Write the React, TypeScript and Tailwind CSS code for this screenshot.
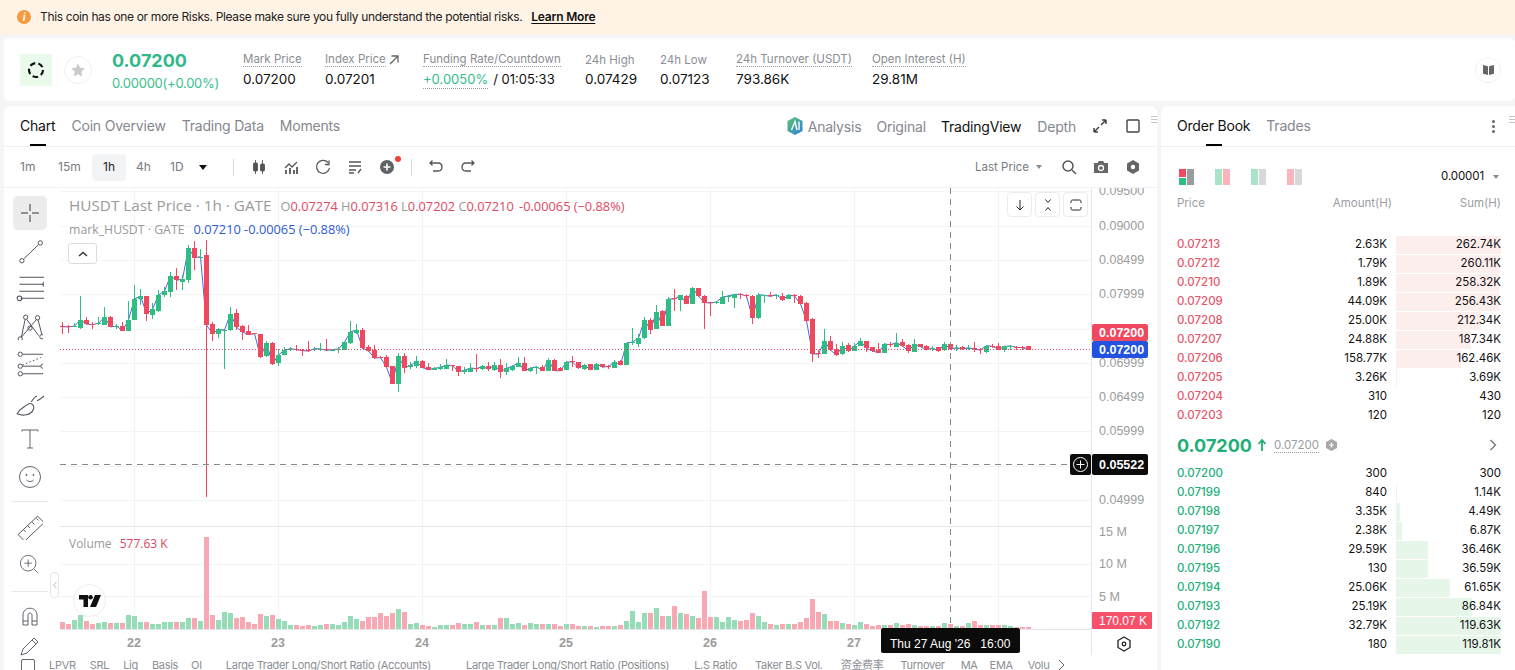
import React from "react";

type Candle = [number, number, number, number, number];

const UI_FONT = "[font-family:Inter,'Noto_Sans_CJK_SC',sans-serif]";

// green flag, body top, body bottom, wick top, wick bottom (zoomed px)
const seg1: Candle[] = [
  [0,408,410,395,432],[0,408,411,405,428],[1,408,411,400,412],[1,390,414,318,416],[0,390,402,380,405],[0,402,404,395,418],
  [1,400,403,382,405],[1,381,405,352,405],[0,381,411,378,412],[1,408,410,403,418],[0,408,422,397,422],[1,390,422,333,422],
  [1,327,390,285,390],[1,318,327,298,345],[0,318,371,318,392],[1,358,375,340,386],[1,315,363,300,365],[1,303,315,290,322],
  [1,258,306,245,320],[0,258,271,235,300],[1,267,275,255,300],[1,174,270,165,280],[0,174,203,153,240],[1,200,203,178,205],
  [0,195,405,150,921],[0,402,431,397,452],[1,418,431,415,445],[1,420,422,420,536],[1,371,420,352,422],[0,369,411,357,420],
  [0,408,426,405,450],[0,423,434,405,436],[0,429,431,428,432],[0,432,501,432,505],[1,459,498,452,500],[0,459,522,455,524],
  [1,495,519,478,528],[1,480,494,472,496],[1,476,479,470,484],[0,477,479,465,482],[0,479,482,478,498],[0,479,483,453,486],
  [1,476,480,470,484],[1,477,480,458,484],[0,478,481,447,484],[1,479,482,476,484],[1,477,480,472,488],[1,456,480,456,480],
  [1,426,459,393,462],[1,420,428,403,432],[0,420,474,413,476],[0,471,483,465,487],[0,479,504,465,506],[0,500,503,498,505],
  [0,501,531,495,535],[0,529,581,529,581],[1,498,581,490,605],[0,498,534,488,548],[1,526,530,515,536],[1,514,528,498,534],
];

const seg2: Candle[] = [
  [0,303,323,300,325],[0,321,329,310,330],[1,325,329,320,330],[1,322,328,312,329],[1,315,327,297,328],[0,315,317,315,332],
  [0,318,335,318,347],[1,331,335,320,341],[1,324,335,310,336],[0,324,326,282,336],[1,319,328,314,330],[0,318,328,306,332],
  [1,315,330,306,332],[0,315,335,298,353],[1,325,335,310,344],[1,319,330,316,332],[1,308,320,292,322],[0,309,332,292,332],
  [1,325,332,320,335],[1,320,325,318,342],[0,320,332,315,333],[1,300,332,293,332],[0,299,332,297,333],[0,323,332,320,333],
  [1,306,330,304,331],[0,304,306,288,322],[0,307,324,306,326],[1,315,327,312,329],[0,312,330,311,331],[1,312,329,310,330],
  [0,313,321,312,323],[0,317,320,315,327],[1,305,324,300,325],[0,303,315,300,316],[1,249,315,248,315],[1,246,250,205,255],
  [1,234,252,222,260],[1,180,235,170,237],[0,180,210,175,222],[1,156,207,135,208],[0,153,198,150,198],[1,117,198,110,198],
  [0,115,117,87,153],[1,106,120,104,153],[0,108,132,105,132],[1,84,132,82,133],[0,85,108,84,110],[0,108,128,106,207],
  [0,126,129,126,168],[1,126,129,123,132],[1,111,132,93,133],[1,108,112,105,126],[1,103,113,102,144],[0,101,103,99,118],
  [0,104,108,102,115],[0,108,174,106,192],[1,104,175,99,177],[1,106,109,105,128],[0,105,109,96,112],[1,104,107,102,117],
  [0,108,120,99,122],[1,105,117,102,118],[0,105,108,102,128],[0,108,132,105,133],[0,128,182,125,185],[0,177,282,173,305],
  [0,279,282,270,295],[1,243,282,207,283],[0,243,270,228,273],[0,268,286,252,288],
];

const seg3: Candle[] = [
  [1,138,163,127,165],[0,135,153,130,155],[1,138,152,130,154],[1,123,137,114,139],[0,124,145,122,155],[0,142,153,140,156],
  [0,149,158,130,160],[1,132,158,128,160],[0,132,134,126,140],[1,128,140,99,142],[0,126,138,118,140],[0,136,153,132,158],
  [1,132,155,118,156],[0,132,140,131,142],[0,138,149,135,151],[1,144,147,137,152],[0,142,153,141,155],[1,132,151,127,152],
  [0,133,147,130,150],[1,143,146,136,152],[0,142,147,139,149],[1,143,146,136,151],[0,145,148,126,155],[0,147,150,143,161],
  [1,137,155,135,160],[0,137,139,132,145],[0,138,149,128,151],[1,139,149,137,155],[1,138,140,135,150],[0,140,142,138,150],
  [0,140,143,138,150],[0,139,149,139,149],
];

const toReal = (seg: Candle[], base: number): Candle[] =>
  seg.map(([g, t, b, h, l]) => [g, base + t / 3, base + b / 3, base + h / 3, base + l / 3]);

const candles: Candle[] = [...toReal(seg1, 190), ...toReal(seg2, 260), ...toReal(seg3, 300)];

const volumes = [
  7,5,9,14,8,5,6,7,6,6,6,14,13,7,7,5,5,7,7,7,7,11,11,8,92,14,9,17,16,11,12,7,5,15,13,14,10,8,4,4,3,4,3,4,5,5,4,7,13,10,8,12,12,16,13,16,20,17,5,6,
  4,3,2,4,4,4,6,5,5,7,4,4,4,11,11,5,6,4,6,5,5,5,5,3,5,5,3,3,3,2,3,3,3,4,8,18,7,16,16,21,13,13,23,16,15,13,11,38,12,12,
  7,12,9,8,9,16,13,7,5,4,5,5,5,7,11,30,17,15,8,8,6,5,4,7,5,3,4,4,4,6,4,5,4,3,3,3,3,6,5,3,3,6,8,4,4,4,4,4,3,2,2,2,
];

const asks = [
  ["0.07213", "2.63K", "262.74K", 105],
  ["0.07212", "1.79K", "260.11K", 104],
  ["0.07210", "1.89K", "258.32K", 103],
  ["0.07209", "44.09K", "256.43K", 103],
  ["0.07208", "25.00K", "212.34K", 85],
  ["0.07207", "24.88K", "187.34K", 75],
  ["0.07206", "158.77K", "162.46K", 65],
  ["0.07205", "3.26K", "3.69K", 1],
  ["0.07204", "310", "430", 0],
  ["0.07203", "120", "120", 0],
] as const;

const bids = [
  ["0.07200", "300", "300", 0],
  ["0.07199", "840", "1.14K", 1],
  ["0.07198", "3.35K", "4.49K", 4],
  ["0.07197", "2.38K", "6.87K", 6],
  ["0.07196", "29.59K", "36.46K", 32],
  ["0.07195", "130", "36.59K", 32],
  ["0.07194", "25.06K", "61.65K", 54],
  ["0.07193", "25.19K", "86.84K", 76],
  ["0.07192", "32.79K", "119.63K", 105],
  ["0.07190", "180", "119.81K", 105],
] as const;

const stats = [
  { label: "Mark Price", value: "0.07200", w: "w-[82px]", dotted: true },
  { label: "Index Price", value: "0.07201", w: "w-[98px]", dotted: true, arrow: true },
  { label: "Funding Rate/Countdown", w: "w-[162px]", dotted: true, funding: true },
  { label: "24h High", value: "0.07429", w: "w-[75px]" },
  { label: "24h Low", value: "0.07123", w: "w-[76px]" },
  { label: "24h Turnover (USDT)", value: "793.86K", w: "w-[136px]", dotted: true },
  { label: "Open Interest (H)", value: "29.81M", w: "w-[100px]", dotted: true },
];

const yTicks: [string, number][] = [
  ["0.09500", 191], ["0.09000", 226], ["0.08499", 260], ["0.07999", 294],
  ["0.06999", 363], ["0.06499", 397], ["0.05999", 431], ["0.04999", 500],
];
const gridY = [191, 226, 260, 294, 329, 363, 397, 431, 466, 500];
const gridX = [134, 278, 422, 566, 710, 854, 998];
const dayLabels: [string, number][] = [["22", 134], ["23", 278], ["24", 422], ["25", 566], ["26", 710], ["27", 854]];

const Ico: React.FC<{ size?: number; className?: string; vb?: string; children: React.ReactNode }> = ({
  size = 24,
  className = "text-[#50535e]",
  vb = "0 0 24 24",
  children,
}) => (
  <svg width={size} height={size} viewBox={vb} fill="none" stroke="currentColor" strokeWidth={0.9} className={`shrink-0 ${className}`}>
    {children}
  </svg>
);

const ToolRail = () => (
  <div className="w-[56px] shrink-0 flex flex-col items-center pr-[5px] pt-[8px] h-[482px] overflow-hidden">
    <div className="w-[34px] h-[34px] rounded-[5px] bg-[#ececec] flex items-center justify-center">
      <Ico size={24} className="text-[#222]">
        <path d="M12 3v7M12 14v7M3 12h7M14 12h7" />
      </Ico>
    </div>
    <div className="mt-[4px] h-[34px] flex items-center">
      <Ico size={26}>
        <circle cx="4.5" cy="21" r="2" />
        <circle cx="21.5" cy="4.5" r="2" />
        <path d="M6 19.5 20 6" />
      </Ico>
    </div>
    <div className="mt-[4px] h-[34px] flex items-center">
      <Ico size={28}>
        <path d="M3 2h22M3 8h21M3 14h21M4 20h22" />
        <circle cx="25" cy="8" r="2" />
        <circle cx="3" cy="20" r="2" />
      </Ico>
    </div>
    <div className="mt-[4px] h-[34px] flex items-center">
      <Ico size={26}>
        <circle cx="8" cy="3" r="2" />
        <circle cx="19" cy="3.5" r="2" />
        <circle cx="3" cy="23" r="2" />
        <circle cx="23" cy="21" r="2" />
        <circle cx="12" cy="13" r="2" />
        <path d="M4 21.5 7.5 5M9 5l11 15M18 5 4 21.5M19.5 5.5 23 19" />
      </Ico>
    </div>
    <div className="mt-[3px] h-[34px] flex items-center">
      <Ico size={26}>
        <circle cx="3" cy="3" r="2" />
        <circle cx="3" cy="14" r="2" />
        <circle cx="3" cy="21" r="2" />
        <circle cx="24" cy="14" r="2" />
        <path d="M5 3h21M5 14h17M5 21h21" />
        <path d="M5 13 22 6" strokeDasharray="1.5 2" />
      </Ico>
    </div>
    <div className="mt-[4px] h-[34px] flex items-center">
      <Ico size={28}>
        <path d="M1 22c4 2 12 2 14-4 1-3-2-6-5-4-4 3-7 4-9 8Z" />
        <path d="M13 12c2-3 3-5 5-5M18 11c3-1 5-3 8-6" />
      </Ico>
    </div>
    <div className="mt-[3px] h-[34px] flex items-center">
      <Ico size={24}>
        <path d="M4 4.5V3h16v1.5M12 3v18M9 21h6" />
      </Ico>
    </div>
    <div className="mt-[4px] h-[34px] flex items-center">
      <Ico size={24}>
        <circle cx="12" cy="12" r="10.5" />
        <circle cx="8.5" cy="10" r=".6" fill="currentColor" />
        <circle cx="15.5" cy="10" r=".6" fill="currentColor" />
        <path d="M8.5 15c2 2 5 2 7 0" />
      </Ico>
    </div>
    <div className="mt-[7px] w-[36px] h-px bg-[#e8e8e8]" />
    <div className="mt-[8px] h-[34px] flex items-center">
      <Ico size={26}>
        <path d="M1 19 19 2l6 6L7 25Z" />
        <path d="M6 14.5l2 2M10 11l2 2M14 7.5l2 2M18 4l2 2" />
      </Ico>
    </div>
    <div className="mt-[4px] h-[34px] flex items-center">
      <Ico size={22}>
        <circle cx="10" cy="10" r="8.5" />
        <path d="M10 6v8M6 10h8M16.5 16.5 21 21" />
      </Ico>
    </div>
    <div className="mt-[9px] w-[36px] h-px bg-[#e8e8e8]" />
    <div className="mt-[8px] h-[34px] flex items-center">
      <Ico size={24}>
        <path d="M5 20V10c0-9 14-9 14 0v10h-5V10c0-2.500-4-2.500-4 0v10ZM5 16h5M14 16h5" />
      </Ico>
    </div>
    <div className="h-[34px] flex items-start">
      <Ico size={24}>
        <path d="M3 21l2-6L16 4l4 4L9 19ZM14 6l4 4" />
      </Ico>
    </div>
  </div>
);

const ChartCanvas = () => {
  const linePts = candles.map((c, i) => `${62.5 + 6 * i},${c[0] ? c[1] : c[2]}`).join(" ");
  const axis = "[font-family:'Liberation_Sans',sans-serif]";
  return (
    <svg width={1097} height={467} viewBox="60 188 1097 467" className="block absolute inset-0">
      <g stroke="#f3f4f5" shapeRendering="crispEdges">
        {gridY.map((y) => (
          <line key={y} x1={60} x2={1091} y1={y + 0.5} y2={y + 0.5} />
        ))}
        {[564, 596].map((y) => (
          <line key={y} x1={60} x2={1091} y1={y + 0.5} y2={y + 0.5} />
        ))}
        {gridX.map((x) => (
          <line key={x} x1={x + 0.5} x2={x + 0.5} y1={188} y2={629} />
        ))}
      </g>
      <g stroke="#e4e6e8" shapeRendering="crispEdges">
        <line x1={60} x2={1091} y1={526.5} y2={526.5} />
        <line x1={1091.5} x2={1091.5} y1={188} y2={655} />
        <line x1={60} x2={1091} y1={629.5} y2={629.5} />
      </g>

      {volumes.map((h, i) => (
        <rect key={i} x={60 + 6 * i} y={629 - h} width={5} height={h} fill={candles[i][0] ? "#97dcb9" : "#f8a8b2"} shapeRendering="crispEdges" />
      ))}

      <polyline points={linePts} fill="none" stroke="#4a68d8" strokeWidth={1} />
      {candles.map((c, i) => {
        const fill = c[0] ? "#2dbd85" : "#f0485f";
        return (
          <g key={i} fill={fill} shapeRendering="crispEdges">
            <rect x={62 + 6 * i} y={c[3]} width={1} height={c[4] - c[3]} />
            <rect x={60 + 6 * i} y={c[1]} width={5} height={Math.max(1, c[2] - c[1])} />
          </g>
        );
      })}

      <line x1={60} x2={1091} y1={349.5} y2={349.5} stroke="#e0485f" strokeDasharray="1 2" shapeRendering="crispEdges" />
      <line x1={60} x2={1070} y1={464.5} y2={464.5} stroke="#85878c" strokeDasharray="6 5" shapeRendering="crispEdges" />
      <line x1={950.5} x2={950.5} y1={188} y2={628} stroke="#85878c" strokeDasharray="6 5" shapeRendering="crispEdges" />

      <g className={axis} fontSize={12.5} fill="#9c9c9c">
        {yTicks.map(([t, y]) => (
          <text key={t} x={1099} y={y + 3.5}>{t}</text>
        ))}
        <text x={1099} y={536}>15 M</text>
        <text x={1099} y={568}>10 M</text>
        <text x={1099} y={601}>5 M</text>
      </g>
      <g className={axis} fontSize={12.5} fontWeight={700} fill="#9c9c9c" textAnchor="middle">
        {dayLabels.map(([t, x]) => (
          <text key={t} x={x} y={647}>{t}</text>
        ))}
      </g>

      <rect x={1092} y={324} width={56} height={17} rx={2} fill="#f0485f" />
      <rect x={1092} y={341} width={56} height={17} rx={2} fill="#2352e0" />
      <rect x={1092} y={454} width={56} height={21} rx={2} fill="#0b0b0b" />
      <rect x={1070} y={454} width={21} height={21} rx={2} fill="#0b0b0b" />
      <circle cx={1080.5} cy={464.5} r={7} fill="none" stroke="#fff" />
      <path d="M1080.5 460.500v8M1076.500 464.500h8" stroke="#fff" />
      <rect x={1092} y={612} width={60} height={17} rx={1} fill="#f7506a" />
      <rect x={881} y={628} width={139} height={25} rx={2} fill="#0b0b0b" />
      <g className={axis} fontSize={12.5} fontWeight={700} fill="#fff">
        <text x={1099} y={337}>0.07200</text>
        <text x={1099} y={354}>0.07200</text>
        <text x={1099} y={469}>0.05522</text>
        <text x={1099} y={625} fontSize={12} fontWeight={400}>170.07 K</text>
      </g>
      <text x={890} y={648} className={axis} fontSize={12} fontWeight={400} fill="#fff" xmlSpace="preserve">Thu 27 Aug '26   16:00</text>

      <path d="M1124 637l6 3.500v7l-6 3.500-6-3.500v-7Z" fill="none" stroke="#222" strokeWidth={1.3} />
      <circle cx={1124} cy={644} r={1.8} fill="none" stroke="#222" strokeWidth={1.3} />
    </svg>
  );
};

const ChartOverlays = () => {
  const legend = "[font-family:'Open_Sans',sans-serif]";
  return (
    <>
      <div className={`absolute left-[9px] top-[6px] flex items-baseline whitespace-nowrap text-[#9a9a9a] ${legend}`}>
        <span className="text-[15.3px]">HUSDT Last Price · 1h · GATE</span>
        <span className="ml-[9px] text-[12.8px]">
          O<span className="text-[#e0485f]">0.07274</span> H<span className="text-[#e0485f]">0.07316</span> L<span className="text-[#e0485f]">0.07202</span> C<span className="text-[#e0485f]">0.07210</span> <span className="ml-[2px] text-[#e0485f]">-0.00065 (−0.88%)</span>
        </span>
      </div>
      <div className={`absolute left-[9px] top-[32px] flex items-baseline whitespace-nowrap text-[#9a9a9a] ${legend}`}>
        <span className="text-[12.3px]">mark_HUSDT · GATE</span>
        <span className="ml-[9px] text-[12.8px] text-[#2f5bd0]">0.07210 -0.00065 (−0.88%)</span>
      </div>
      <div className="absolute left-[8px] top-[55px] w-[29px] h-[21px] rounded-[3px] border border-[#dcdcdc] bg-white flex items-center justify-center">
        <Ico size={14} className="text-[#333]" vb="0 0 14 14">
          <path d="M3 9l4-3.500L11 9" strokeWidth={1.4} />
        </Ico>
      </div>

      <div className="absolute left-[947px] top-[4px] flex gap-[3px]">
        <div className="w-[25px] h-[25px] rounded-[4px] border border-[#ececec] bg-white flex items-center justify-center">
          <Ico size={14} className="text-[#222]" vb="0 0 14 14">
            <path d="M7 2v10M3.500 8.500 7 12l3.500-3.500" strokeWidth={1} />
          </Ico>
        </div>
        <div className="w-[25px] h-[25px] rounded-[4px] border border-[#ececec] bg-white flex items-center justify-center">
          <Ico size={14} className="text-[#222]" vb="0 0 14 14">
            <path d="M4.500 1.500 7 4.500l2.500-3M4.500 12.500 7 9.500l2.500 3" strokeWidth={1} />
          </Ico>
        </div>
        <div className="w-[25px] h-[25px] rounded-[4px] border border-[#ececec] bg-white flex items-center justify-center">
          <Ico size={14} className="text-[#222]" vb="0 0 14 14">
            <path d="M2 5V3.500C2 2.500 2.500 2 3.500 2h7c1 0 1.500.5 1.500 1.500V5M2 9v1.500c0 1 .5 1.500 1.500 1.500h7c1 0 1.500-.5 1.500-1.500V9" strokeWidth={1} />
          </Ico>
        </div>
      </div>

      <div className="absolute -left-[10px] top-[384px] w-[9px] h-[26px] rounded-[4px] border border-[#e6e6e6] bg-white flex items-center justify-center">
        <Ico size={8} className="text-[#aaa]" vb="0 0 8 8">
          <path d="M5.500 1 2.500 4l3 3" />
        </Ico>
      </div>

      <div className="absolute left-[13px] top-[396px] w-[33px] h-[33px] rounded-full border border-[#ededed] bg-white flex items-center justify-center">
        <svg width="22" height="12" viewBox="0 0 22 12" fill="#111">
          <path d="M0 0h9v12H4.500V4.500H0Z" />
          <circle cx="11.500" cy="2.300" r="2.300" />
          <path d="M16 0h6l-5 12h-6Z" />
        </svg>
      </div>

      <div className={`absolute left-[9px] top-[347px] whitespace-nowrap text-[12px] text-[#9a9a9a] ${legend}`}>
        Volume <span className="ml-[5px] text-[#e0485f]">577.63 K</span>
      </div>
    </>
  );
};

const TopTab: React.FC<{ active?: boolean; bar?: string; children: React.ReactNode; className?: string }> = ({ active, bar, children, className = "" }) => (
  <div className={`relative h-[40px] pb-[1px] flex items-center whitespace-nowrap text-[14px] tracking-[-0.2px] ${active ? "text-[#111]" : "text-[#85888f]"} ${className}`}>
    {children}
    {bar && <span className={`absolute bottom-0 h-[2px] bg-black ${bar}`} />}
  </div>
);

const DragDots = () => (
  <span className="absolute right-[0px] top-[10px] w-[6px] flex flex-col gap-[2px]">
    <i className="block h-px bg-[#c4c4c4]" />
    <i className="block h-px bg-[#c4c4c4]" />
    <i className="block h-px bg-[#c4c4c4]" />
  </span>
);

const ChartPanel = () => (
  <section className="relative w-[1153px] shrink-0 rounded-t-[6px] bg-white">
    <DragDots />
    <div className="h-[41px] flex items-center px-[16px] border-b border-[#f0f1f2]">
      <div className="flex gap-[16px]">
        <TopTab active bar="left-[10px] w-[16px]">Chart</TopTab>
        <TopTab>Coin Overview</TopTab>
        <TopTab>Trading Data</TopTab>
        <TopTab>Moments</TopTab>
      </div>
      <div className="ml-auto flex items-center tracking-[-0.2px] text-[14px]">
        <svg width="18" height="20" viewBox="0 0 18 20" className="mr-[4px]">
          <defs>
            <linearGradient id="ai" x1="0" y1="0" x2="1" y2="1">
              <stop offset="0" stopColor="#5cc46a" />
              <stop offset="1" stopColor="#2d7fe0" />
            </linearGradient>
          </defs>
          <path d="M9 1l7.500 4v10L9 19l-7.500-4V5Z" fill="url(#ai)" />
          <path d="M5.500 14 9 5.500 11 14M13 5.500V14" stroke="#fff" strokeWidth="1.400" fill="none" />
        </svg>
        <span className="text-[#85888f]">Analysis</span>
        <span className="ml-[15px] text-[#85888f]">Original</span>
        <span className="ml-[15px] text-[#111]">TradingView</span>
        <span className="ml-[16px] text-[#85888f]">Depth</span>
        <Ico size={16} className="ml-[16px] text-[#444]" vb="0 0 16 16">
          <path d="M9 7l5-5M14 2H10M14 2v4M7 9l-5 5M2 14h4M2 14v-4" strokeWidth={1.5} />
        </Ico>
        <Ico size={16} className="ml-[17px] text-[#444]" vb="0 0 16 16">
          <rect x="2" y="2" width="12" height="12" rx="1" strokeWidth={1.400} />
        </Ico>
      </div>
    </div>

    <div className="h-[41px] flex items-center border-b border-[#f0f1f2] pl-[16px] pr-[16px] text-[12px] text-[#777b82]">
      <span className="w-[38px]">1m</span>
      <span className="w-[34px]">15m</span>
      <span className="w-[34px] h-[27px] rounded-[4px] bg-[#f3f4f5] flex items-center justify-center text-[#222]">1h</span>
      <span className="ml-[10px] w-[34px]">4h</span>
      <span className="w-[26px]">1D</span>
      <span className="ml-[3px] w-0 h-0 border-x-[4px] border-t-[5px] border-x-transparent border-t-[#111]" />
      <span className="ml-[26px] w-px h-[17px] bg-[#d8d8d8]" />
      <Ico size={16} className="ml-[17px] text-[#555]" vb="0 0 16 16">
        <path d="M4.500 1v14M11.500 1v14" />
        <rect x="2.500" y="4" width="4" height="8" rx="1" fill="currentColor" />
        <rect x="9.500" y="5" width="4" height="7" rx="1" fill="currentColor" />
      </Ico>
      <Ico size={16} className="ml-[16px] text-[#555]" vb="0 0 16 16">
        <path d="M2 9l4-4 3 3 5-5" strokeWidth={1.300} />
        <path d="M3 11v4M7 9v6M11 11v4M14 8v7" strokeWidth={1.800} />
      </Ico>
      <Ico size={16} className="ml-[16px] text-[#555]" vb="0 0 16 16">
        <path d="M13 3.500A6.500 6.500 0 1 0 14.500 9" strokeWidth={1.300} />
        <path d="M10 5.500h4v-4" strokeWidth={1.300} />
      </Ico>
      <Ico size={16} className="ml-[16px] text-[#555]" vb="0 0 16 16">
        <path d="M2 3h12M2 7h12M2 11h7M2 14h5M11 14l3-4" strokeWidth={1.300} />
      </Ico>
      <div className="relative ml-[16px]">
        <svg width="16" height="16" viewBox="0 0 16 16">
          <circle cx="8" cy="8" r="7" fill="#5f6368" />
          <path d="M8 4.500v7M4.500 8h7" stroke="#fff" strokeWidth="1.600" />
        </svg>
        <span className="absolute -right-[6px] -top-[3px] w-[6px] h-[6px] rounded-full bg-[#f0403c]" />
      </div>
      <span className="ml-[16px] w-px h-[17px] bg-[#d8d8d8]" />
      <Ico size={16} className="ml-[16px] text-[#555]" vb="0 0 16 16">
        <path d="M2 4h8c3 0 4 2 4 4s-1 4-4 4H5M4.500 1.500 2 4l2.500 2.500" strokeWidth={1.300} />
      </Ico>
      <Ico size={16} className="ml-[16px] text-[#555]" vb="0 0 16 16">
        <path d="M14 4H6C3 4 2 6 2 8s1 4 4 4h5M11.500 1.500 14 4l-2.500 2.500" strokeWidth={1.300} />
      </Ico>
      <div className="ml-auto flex items-center">
        <span className="pt-[2px] text-[11.5px]">Last Price</span>
        <span className="ml-[7px] w-0 h-0 border-x-[3.500px] border-t-[4px] border-x-transparent border-t-[#8b8b8b]" />
        <Ico size={16} className="ml-[19px] text-[#555]" vb="0 0 16 16">
          <circle cx="7" cy="7" r="5" strokeWidth={1.500} />
          <path d="M11 11l4 4" strokeWidth={1.500} />
        </Ico>
        <svg width="16" height="16" viewBox="0 0 16 16" className="ml-[16px]">
          <path d="M1 4h3.500L6 2h4l1.500 2H15v10H1Z" fill="#666" />
          <circle cx="8" cy="9" r="2.500" fill="none" stroke="#fff" strokeWidth="1.300" />
        </svg>
        <svg width="16" height="16" viewBox="0 0 16 16" className="ml-[16px]">
          <path d="M8 1l6 3.500v7L8 15l-6-3.500v-7Z" fill="#666" />
          <circle cx="8" cy="8" r="2.200" fill="#fff" />
        </svg>
      </div>
    </div>

    <div className="flex">
      <ToolRail />
      <div className="relative w-[1097px] h-[467px]">
        <ChartCanvas />
        <ChartOverlays />
      </div>
    </div>

    <div className="relative -mt-[15px] h-[15px] pt-[5px] flex items-center whitespace-nowrap text-[11px] tracking-[-0.3px] text-[#8b8e94]">
      <span className="ml-[17px] w-[14px] h-[13px] border border-[#666] rounded-[2px] shrink-0 bg-white" />
      <span className="ml-[14px]">LPVR</span>
      <span className="ml-[14px]">SRL</span>
      <span className="ml-[14px]">Liq</span>
      <span className="ml-[14px]">Basis</span>
      <span className="ml-[13px]">OI</span>
      <span className="ml-[24px]">Large Trader Long/Short Ratio (Accounts)</span>
      <span className="ml-[35px]">Large Trader Long/Short Ratio (Positions)</span>
      <span className="ml-[25px]">L.S Ratio</span>
      <span className="ml-[18px]">Taker B.S Vol.</span>
      <span className="ml-[18px]">资金费率</span>
      <span className="ml-[17px]">Turnover</span>
      <span className="ml-[16px]">MA</span>
      <span className="ml-[12px]">EMA</span>
      <span className="ml-[15px] w-[22px] overflow-hidden">Volume</span>
      <Ico size={12} className="ml-[5px] text-[#555]" vb="0 0 12 12">
        <path d="M4 1l5 5-5 5" />
      </Ico>
    </div>
  </section>
);

const BookRow: React.FC<{ row: readonly [string, string, string, number]; side: "ask" | "bid" }> = ({ row, side }) => (
  <div className="relative h-[19px] flex items-center text-[11.5px] text-[#111]">
    {row[3] > 0 && (
      <span
        className={`absolute left-[219px] top-[1px] bottom-0 ${side === "ask" ? "bg-[#fdeeee]" : "bg-[#e6f7ea]"}`}
        style={{ width: row[3] }}
      />
    )}
    <span className={`relative w-[60px] font-medium ${side === "ask" ? "text-[#e5586c]" : "text-[#22b07a]"}`}>{row[0]}</span>
    <span className="relative w-[150px] text-right">{row[1]}</span>
    <span className="relative ml-auto">{row[2]}</span>
  </div>
);

const LayoutIcon: React.FC<{ a: string; b: string }> = ({ a, b }) => (
  <span className="flex gap-[1px] w-[16px] h-[16px]">
    <span className={`w-[7px] h-full ${a}`} />
    <span className={`w-[7px] h-full ${b}`} />
  </span>
);

const OrderBookPanel = () => (
  <section className="relative flex-1 rounded-tl-[6px] bg-white">
    <DragDots />
    <div className="h-[41px] flex items-center px-[16px] border-b border-[#f0f1f2]">
      <TopTab active bar="left-[29px] w-[16px]">Order Book</TopTab>
      <TopTab className="ml-[16px]">Trades</TopTab>
      <div className="ml-auto mr-[4px] flex flex-col gap-[2px]">
        <i className="block w-[3px] h-[3px] rounded-full bg-[#666]" />
        <i className="block w-[3px] h-[3px] rounded-full bg-[#666]" />
        <i className="block w-[3px] h-[3px] rounded-full bg-[#666]" />
      </div>
    </div>
    <div className="px-[16px] pr-[14px]">
      <div className="h-[20px] mt-[20px] flex items-center">
        <span className="ml-[2px] flex gap-[1px] w-[16px] h-[16px]">
          <span className="flex flex-col gap-[1px] w-[7px]">
            <i className="block flex-1 bg-[#f0485f]" />
            <i className="block flex-1 bg-[#2dbd85]" />
          </span>
          <span className="w-[7px] bg-[#9c9c9c]" />
        </span>
        <span className="ml-[20px]"><LayoutIcon a="bg-[#a8e4c8]" b="bg-[#fbb4bc]" /></span>
        <span className="ml-[20px]"><LayoutIcon a="bg-[#a8e4c8]" b="bg-[#d8d8d8]" /></span>
        <span className="ml-[20px]"><LayoutIcon a="bg-[#fbb4bc]" b="bg-[#d8d8d8]" /></span>
        <span className="ml-auto text-[11.5px] tracking-[-0.1px] text-[#111]">0.00001</span>
        <span className="ml-[9px] mr-[2px] w-0 h-0 border-x-[3.500px] border-t-[4px] border-x-transparent border-t-[#8b8b8b]" />
      </div>
      <div className="mt-[8px] h-[18px] flex items-center text-[11.5px] text-[#9a9da3]">
        <span className="w-[100px]">Price</span>
        <span className="w-[115px] text-right">Amount(H)</span>
        <span className="ml-auto">Sum(H)</span>
      </div>
      <div className="mt-[22px]">
        {asks.map((r) => (
          <BookRow key={r[0]} row={r} side="ask" />
        ))}
      </div>
      <div className="h-[39px] pt-[1px] flex items-center">
        <span className="text-[18px] font-bold text-[#1fae78]">0.07200</span>
        <svg width="10" height="12" viewBox="0 0 10 12" className="ml-[5px]">
          <path d="M5 1v11M1.500 5 5 1l3.500 4" fill="none" stroke="#1fae78" strokeWidth="1.800" />
        </svg>
        <span className="ml-[7px] text-[11.5px] text-[#9a9da3] border-b border-dotted border-[#9a9da3] leading-[14px]">0.07200</span>
        <svg width="13" height="14" viewBox="0 0 13 14" className="ml-[6px]">
          <path d="M6.500 1l5.500 3v6l-5.500 3L1 10V4Z" fill="#a8a8a8" />
          <path d="M6.500 4.500v5M4 7h5" stroke="#fff" strokeWidth="1.200" />
        </svg>
        <Ico size={12} className="ml-auto mr-[2px] text-[#777]" vb="0 0 12 12">
          <path d="M3.500 1 8.500 6l-5 5" strokeWidth={1.400} />
        </Ico>
      </div>
      <div>
        {bids.map((r) => (
          <BookRow key={r[0]} row={r} side="bid" />
        ))}
      </div>
    </div>
  </section>
);

const TickerBar = () => (
  <div className="ml-[4px] mt-[3px] h-[63px] rounded-[5px] bg-white flex items-center pl-[16px] pr-[14px]">
    <div className="w-[32px] h-[32px] bg-[#eafaeb] flex items-center justify-center">
      <svg width="22" height="22" viewBox="0 0 22 22" fill="none" stroke="#111" strokeWidth="2.200" strokeDasharray="5.600 3.200">
        <circle cx="11" cy="11" r="7" />
      </svg>
    </div>
    <div className="ml-[12px] w-[28px] h-[28px] rounded-full border border-[#f0f0f0] flex items-center justify-center">
      <svg width="16" height="16" viewBox="0 0 24 24" fill="#c9cbce">
        <path d="M12 2l3.100 6.500 7 1-5 5 1.200 7.200L12 18.300l-6.300 3.400L6.900 14.500l-5-5 7-1Z" />
      </svg>
    </div>
    <div className="ml-[20px] w-[131px] pt-[1px]">
      <div className="text-[18px] leading-[24px] font-bold text-[#2fb88a]">0.07200</div>
      <div className="mt-[1px] text-[13px] tracking-[-0.25px] leading-[18px] text-[#39c08e]">0.00000(+0.00%)</div>
    </div>
    {stats.map((s) => (
      <div key={s.label} className={`${s.w} shrink-0 pt-[1px]`}>
        <div className="flex items-center h-[16px]">
          <span className={`text-[11.5px] leading-[14px] text-[#8a8d93] whitespace-nowrap ${s.dotted ? "border-b border-dotted border-[#9a9da3]" : ""}`}>{s.label}</span>
          {s.arrow && (
            <Ico size={10} className="ml-[3px] text-[#666]" vb="0 0 10 10">
              <path d="M1 9l8-8M2.500 1H9v6.500" strokeWidth={1.300} />
            </Ico>
          )}
        </div>
        <div className="mt-[3px] h-[18px] flex items-center whitespace-nowrap text-[13.5px] text-[#111]">
          {s.funding ? (
            <>
              <span className="text-[13px] text-[#35bd8b] border-b border-dotted border-[#9a9da3] leading-[17px]">+0.0050%</span>
              <span className="ml-[5px] text-[13px]">/ 01:05:33</span>
            </>
          ) : (
            s.value
          )}
        </div>
      </div>
    ))}
    <div className="ml-auto w-[26px] h-[26px] rounded-full border border-[#f2f2f2] flex items-center justify-center">
      <svg width="13" height="13" viewBox="0 0 13 13">
        <path d="M1 2l5 1.200V12L1 10.800ZM7 3.200 12 2v8.800L7 12Z" fill="#666" />
      </svg>
    </div>
  </div>
);

export default function App() {
  return (
    <div className={`w-[1515px] h-[670px] overflow-hidden bg-[#f3f5f6] ${UI_FONT}`}>
      <div className="h-[35px] pb-[1px] bg-[#fff3e6] flex items-center pl-[17px] text-[12px] text-[#222]">
        <span className="w-[14px] h-[14px] rounded-full bg-[#f59a3e] flex items-center justify-center text-[10px] italic font-bold text-white">i</span>
        <span className="ml-[9px] tracking-[-0.35px]">This coin has one or more Risks. Please make sure you fully understand the potential risks.</span>
        <span className="ml-[9px] tracking-[-0.2px] font-semibold text-[#111] underline underline-offset-2">Learn More</span>
      </div>
      <TickerBar />
      <div className="mt-[5px] ml-[4px] flex gap-[4px]">
        <ChartPanel />
        <OrderBookPanel />
      </div>
    </div>
  );
}
